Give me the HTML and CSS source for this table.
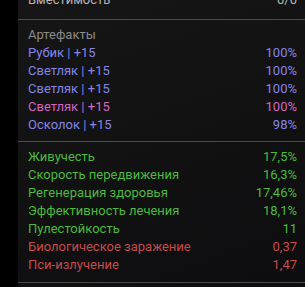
FILE: index.html
```html
<!DOCTYPE html>
<html lang="ru">
<head>
<meta charset="utf-8">
<link rel="stylesheet" href="styles.css">
</head>
<body>
<div class="panel">
  <section class="sec sec-top">
    <div class="row cap"><span>Вместимость</span><span>0/0</span></div>
  </section>
  <section class="sec sec-art">
    <div class="row title"><span>Артефакты</span></div>
    <div class="row blue"><span>Рубик | +15</span><span>100%</span></div>
    <div class="row blue"><span>Светляк | +15</span><span>100%</span></div>
    <div class="row blue"><span>Светляк | +15</span><span>100%</span></div>
    <div class="row pink"><span>Светляк | +15</span><span>100%</span></div>
    <div class="row blue"><span>Осколок | +15</span><span>98%</span></div>
  </section>
  <section class="sec sec-stats">
    <div class="row green"><span>Живучесть</span><span>17,5%</span></div>
    <div class="row green"><span>Скорость передвижения</span><span>16,3%</span></div>
    <div class="row green"><span>Регенерация здоровья</span><span>17,46%</span></div>
    <div class="row green"><span>Эффективность лечения</span><span>18,1%</span></div>
    <div class="row green"><span>Пулестойкость</span><span>11</span></div>
    <div class="row red"><span>Биологическое заражение</span><span>0,37</span></div>
    <div class="row red"><span>Пси-излучение</span><span>1,47</span></div>
  </section>
</div>
</body>
</html>
```
FILE: styles.css
```css
html, body {
  margin: 0;
  padding: 0;
  background: #000;
  height: 100%;
  overflow: hidden;
}
body {
  font-family: Roboto, "Liberation Sans", sans-serif;
  font-size: 13px;
}
.panel {
  margin: -9px 0 0 18px;
  height: calc(100% + 9px);
  box-sizing: border-box;
  background: linear-gradient(160deg, #161616 0%, #121212 45%, #0d0d10 100%);
}
.sec {
  padding: 0 8px 0 10px;
  border-bottom: 1px solid #4a4a4a;
}
.sec-top { padding-bottom: 10px; }
.sec-art { padding-top: 6px; padding-bottom: 7px; }
.sec-stats { padding-top: 6px; padding-bottom: 8px; }
.row {
  display: flex;
  justify-content: space-between;
  line-height: 18px;
  height: 18px;
  white-space: nowrap;
}
.cap { color: #b8b8b8; }
.title { color: #8a8a8a; }
.blue { color: #8585e6; }
.pink { color: #d265c3; }
.green { color: #4cba3c; }
.red { color: #c84a4a; }
```
